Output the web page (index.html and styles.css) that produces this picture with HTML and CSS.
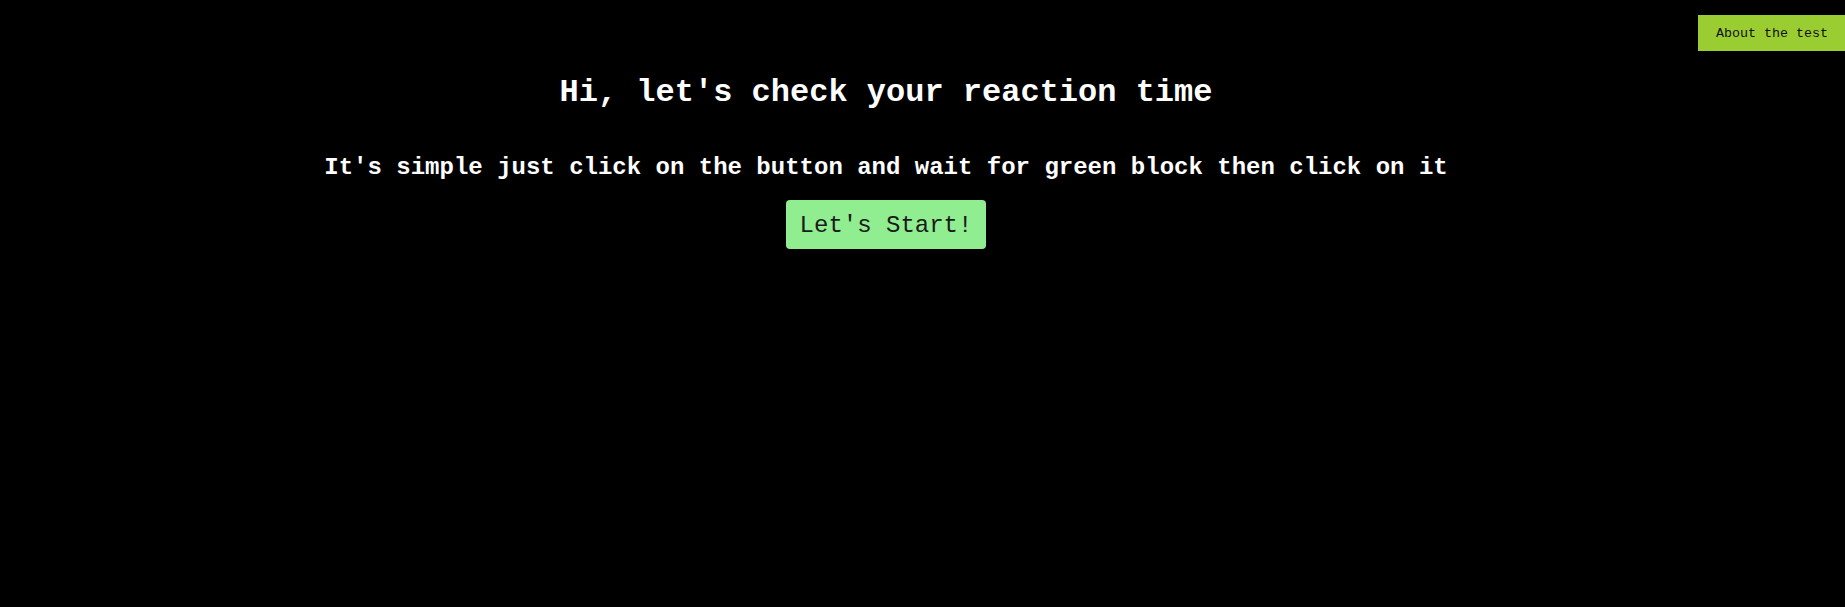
FILE: index.html
```html
<!DOCTYPE html>
<html lang="en">
<head>
<meta charset="utf-8">
<title>Reaction time test</title>
<link rel="stylesheet" href="styles.css">
</head>
<body>
<header class="topbar">
  <button class="about-btn" type="button">About the test</button>
</header>
<main class="intro">
  <h1 class="title">Hi, let's check your reaction time</h1>
  <h2 class="subtitle">It's simple just click on the button and wait for green block then click on it</h2>
  <button class="start-btn" type="button">Let's Start!</button>
</main>
</body>
</html>
```
FILE: styles.css
```css
html, body {
  margin: 0;
  padding: 0;
  background: #000;
  color: #fff;
  font-family: "Courier New", "Liberation Mono", monospace;
  height: 100%;
}

.topbar {
  display: flex;
  justify-content: flex-end;
  padding-top: 15px;
}

.about-btn {
  font-family: "Courier New", "Liberation Mono", monospace;
  font-size: 13.333px;
  line-height: 16px;
  background: #9acd32;
  color: #111;
  border: none;
  border-radius: 0;
  padding: 11px 17px 9px 18px;
  width: 147px;
  height: 36px;
  margin: 0;
}

.intro {
  text-align: center;
  padding-right: 73px;
}

.title {
  font-size: 32px;
  font-weight: bold;
  margin: 24px 0 0;
  line-height: 36px;
}

.subtitle {
  font-size: 24px;
  font-weight: bold;
  margin: 43px 0 19px;
  line-height: 27px;
}

.start-btn {
  font-family: "Courier New", "Liberation Mono", monospace;
  font-size: 24px;
  line-height: 27px;
  background: #90ee90;
  color: #1a1a1a;
  border: none;
  border-radius: 4px;
  padding: 12px 13px 10px;
  width: 200px;
  height: 49px;
}
```
